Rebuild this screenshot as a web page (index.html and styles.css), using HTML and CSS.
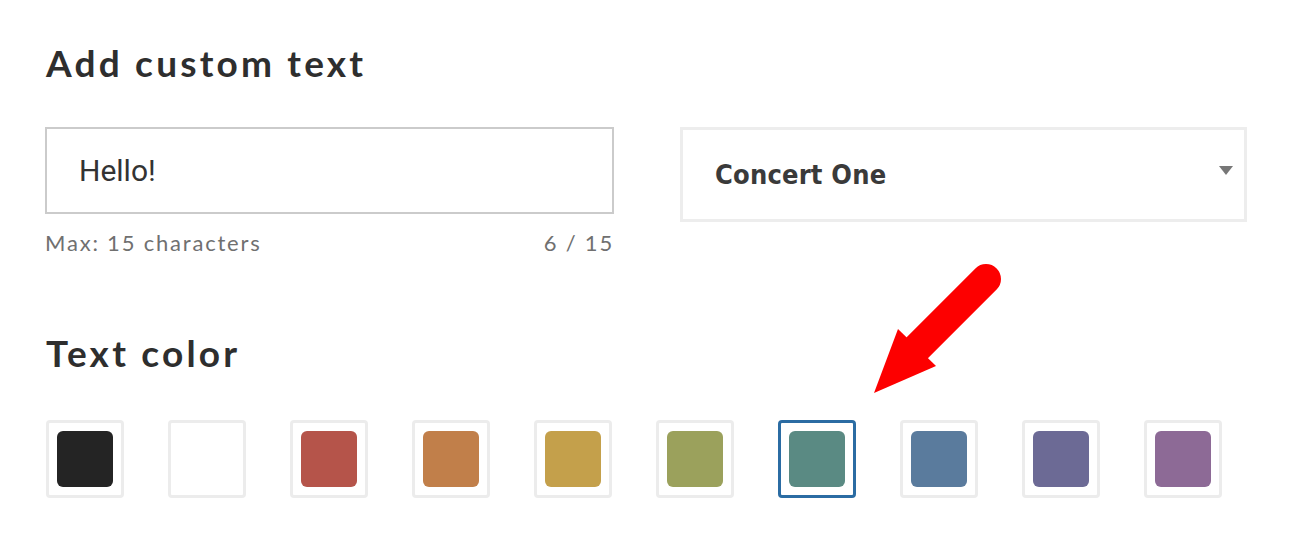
FILE: index.html
```html
<!DOCTYPE html>
<html lang="en">
<head>
    <meta charset="UTF-8">
    <meta name="viewport" content="width=device-width, initial-scale=1.0">
    <title>Custom Text</title>
    <link rel="stylesheet" href="styles.css">
</head>
<body>
    <div class="panel">
        <h2 class="title">Add custom text</h2>

        <div class="text-row">
            <div class="field">
                <input class="text-input" type="text" value="Hello!" maxlength="15">
                <div class="hint">
                    <span>Max: 15 characters</span>
                    <span>6 / 15</span>
                </div>
            </div>
            <div class="font-select">
                <span class="font-name">Concert One</span>
                <span class="caret"></span>
            </div>
        </div>

        <h2 class="title title-color">Text color</h2>

        <div class="swatches">
            <div class="swatch"><span style="background:#242424"></span></div>
            <div class="swatch"><span style="background:#ffffff"></span></div>
            <div class="swatch"><span style="background:#b5544a"></span></div>
            <div class="swatch"><span style="background:#c17f4a"></span></div>
            <div class="swatch"><span style="background:#c4a04b"></span></div>
            <div class="swatch"><span style="background:#9ba15c"></span></div>
            <div class="swatch selected"><span style="background:#5a8a83"></span></div>
            <div class="swatch"><span style="background:#5a7b9d"></span></div>
            <div class="swatch"><span style="background:#6c6a95"></span></div>
            <div class="swatch"><span style="background:#8d6a96"></span></div>
        </div>

        <!-- annotation arrow -->
        <svg class="arrow" width="150" height="145" viewBox="0 0 150 145">
            <line x1="126" y1="24" x2="57" y2="93" stroke="#fd0000" stroke-width="30" stroke-linecap="round"/>
            <polygon points="38,74 76,111 14,138" fill="#fd0000"/>
        </svg>
    </div>
</body>
</html>
```

FILE: styles.css
```css
body {
    margin: 0;
    background: white;
    font-family: Lato, "Open Sans", sans-serif;
    color: #333;
}
.panel {
    position: relative;
    padding: 41px 0 0 46px;
}
.title {
    margin: 0;
    font-family: Lato, sans-serif;
    font-size: 37px;
    line-height: 44px;
    font-weight: 700;
    letter-spacing: 3.2px;
    color: #2e2e2e;
}
.text-row {
    display: flex;
    align-items: flex-start;
    gap: 66px;
    margin-top: 42px;
}
.field {
    width: 569px;
    margin-left: -1px;
}
.text-input {
    display: block;
    width: 100%;
    height: 87px;
    box-sizing: border-box;
    padding: 0 32px;
    border: 2px solid #cbcbcb;
    border-radius: 0;
    font-family: Roboto, sans-serif;
    font-size: 30px;
    color: #333;
    outline: none;
}
.hint {
    display: flex;
    justify-content: space-between;
    margin-top: 17px;
    font-size: 22px;
    line-height: 24px;
    letter-spacing: 1.8px;
    color: #707070;
}
.font-select {
    width: 567px;
    height: 95px;
    box-sizing: border-box;
    border: 3px solid #ededed;
    padding: 0 11px 0 32px;
    display: flex;
    align-items: center;
    justify-content: space-between;
}
.font-name {
    font-family: "DejaVu Sans Condensed", "DejaVu Sans", sans-serif;
    font-weight: 700;
    font-size: 27px;
    letter-spacing: 0.2px;
    color: #3a3a3a;
}
.caret {
    width: 0;
    height: 0;
    border-left: 7px solid transparent;
    border-right: 7px solid transparent;
    border-top: 9px solid #777;
    margin-top: -8px;
}
.title-color {
    margin-top: 76px;
}
.swatches {
    display: flex;
    gap: 44px;
    margin-top: 45px;
}
.swatch {
    width: 78px;
    height: 78px;
    box-sizing: border-box;
    padding: 8px;
    border: 3px solid #ececec;
    border-radius: 4px;
}
.swatch span {
    display: block;
    width: 56px;
    height: 56px;
    border-radius: 6px;
}
.swatch.selected {
    border-color: #2b6ca3;
}
.arrow {
    position: absolute;
    left: 860px;
    top: 255px;
}
```
